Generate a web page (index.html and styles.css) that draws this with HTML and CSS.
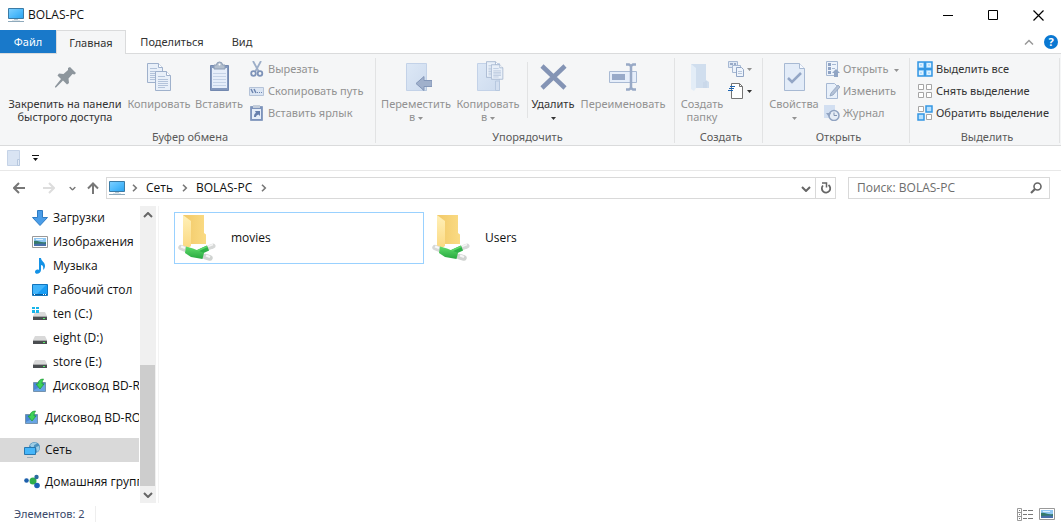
FILE: index.html
```html
<!DOCTYPE html>
<html lang="ru">
<head>
<meta charset="utf-8">
<title>BOLAS-PC</title>
<link rel="stylesheet" href="styles.css">
</head>
<body>
<svg class="defs" aria-hidden="true">
  <defs>
    <linearGradient id="screen" x1="0" y1="0" x2="1" y2="1"><stop offset="0" stop-color="#7fd0ff"/><stop offset=".5" stop-color="#52bcfc"/><stop offset="1" stop-color="#2aa3f0"/></linearGradient>
    <linearGradient id="folderBack" x1="0" y1="0" x2="1" y2="0"><stop offset="0" stop-color="#f2c968"/><stop offset="1" stop-color="#fadb84"/></linearGradient>
    <linearGradient id="folderFront" x1="0" y1="0" x2="0" y2="1"><stop offset="0" stop-color="#fff0b8"/><stop offset="1" stop-color="#fbd982"/></linearGradient>
    <linearGradient id="pipe" x1="0" y1="0" x2="0" y2="1"><stop offset="0" stop-color="#5fdc6c"/><stop offset="1" stop-color="#27a83f"/></linearGradient>
    <linearGradient id="pale" x1="0" y1="0" x2="1" y2="1"><stop offset="0" stop-color="#dde8f6"/><stop offset="1" stop-color="#cddbee"/></linearGradient>
  </defs>
  <symbol id="monitor" viewBox="0 0 16 16"><path d="M.5 1.500h15v10H.5z" fill="url(#screen)" stroke="#3b7ba5"/><path d="M6 12h4v1H6z" fill="#b7c9d5"/><path d="M4 13h8v1H4z" fill="#dbe3e8"/><path d="M0 14.500h16" stroke="#8ea9bb"/></symbol>
  <symbol id="page" viewBox="0 0 17 20"><path d="M.5.5h11l4 4v15H.5z" fill="#e9f0f9" stroke="#9fb1cc"/><path d="M11.500.5v4h4" fill="#fff" stroke="#9fb1cc"/><path d="M3 5.500h7M3 8.500h10M3 10.500h10M3 12.500h10M3 14.500h10M3 16.500h7" stroke="#b3c3da"/></symbol>
  <symbol id="drv" viewBox="0 0 16 16"><path d="M3 6h10l2 4H1z" fill="#d9d9d9"/><path d="M1 10h14v4H1z" fill="#4a4d50"/><path d="M1 10h14v1H1z" fill="#a5a7a8"/><path d="M11 12h2v1h-2z" fill="#55ee66"/></symbol>
  <symbol id="disc" viewBox="0 0 16 16"><path d="M1.500 4.500h12v9h-12z" fill="#4a86d6" stroke="#7593ae"/><path d="M2 12l11-6v7H2z" fill="#68a4e4"/><path d="M11.500 1C8 1 6 3 6 6H4l4 5 4-5h-2c0-2 .5-3 1.500-5z" fill="#3fd257" stroke="#1e9a33" stroke-width=".7"/></symbol>
  <symbol id="picture" viewBox="0 0 16 16"><path d="M.5 2.500h15v11H.5z" fill="#fff" stroke="#999"/><path d="M2 4h12v8H2z" fill="#8fc7f3"/><path d="M2 7c4-1 6 2 12 1v2H2z" fill="#357a6a"/><path d="M2 10c4 0 7-1 12 0v2H2z" fill="#486fab"/><path d="M4 5h7v1H4z" fill="#dff1ff"/></symbol>
  <symbol id="netfolder" viewBox="0 0 38 48">
    <path d="M5 1h21v18l2 1.500V30H5z" fill="url(#folderBack)"/><path d="M5 1l8 6v25l-3 2-5-2z" fill="url(#folderFront)"/>
    <path d="M31 33.500l4-1.500" stroke="#d6d8d7" stroke-width="5" stroke-linecap="round"/><path d="M30 32.500l5-2" stroke="#f6f6f6" stroke-width="1.500"/>
    <path d="M18 39.500L30 34" stroke="#2fb148" stroke-width="5.500"/><path d="M18 37.500L29 32.500" stroke="#5bd86a" stroke-width="1.500"/>
    <path d="M3 33.500l5 2" stroke="#d6d8d7" stroke-width="5.500" stroke-linecap="round"/><path d="M3 32.500l4 1.500" stroke="#f8f8f8" stroke-width="2"/>
    <path d="M27 42.500l5 1.500" stroke="#d0d3d1" stroke-width="5.500" stroke-linecap="round"/><path d="M28 41.500l4 1.500" stroke="#f6f6f6" stroke-width="2"/>
    <path d="M8 32.500l7 2 11 4.500-1.500 6L13 43l-6-4z" fill="url(#pipe)"/>
  </symbol>
  <symbol id="caret" viewBox="0 0 5 3"><path d="M0 0h5L2.500 3z" fill="currentColor"/></symbol>
  <symbol id="chev" viewBox="0 0 6 8"><path d="M1 .7L4.300 4 1 7.300" fill="none" stroke="#777" stroke-width="1.600"/></symbol>
  <symbol id="angle" viewBox="0 0 10 6"><path d="M1 1l4 4 4-4" fill="none" stroke="currentColor" stroke-width="2"/></symbol>
</svg>

<header class="titlebar">
  <svg class="i16"><use href="#monitor"/></svg>
  <h1 class="title">BOLAS-PC</h1>
  <div class="window-buttons">
    <button class="winbtn" aria-label="Свернуть"><svg class="i11" viewBox="0 0 11 11"><path d="M0 5.500h10" stroke="#000"/></svg></button>
    <button class="winbtn" aria-label="Развернуть"><svg class="i11" viewBox="0 0 11 11"><path d="M.5.5h9v9h-9z" fill="none" stroke="#000"/></svg></button>
    <button class="winbtn" aria-label="Закрыть"><svg class="i11" viewBox="0 0 11 11"><path d="M.5.5l10 10M10.500.5l-10 10" stroke="#000" stroke-width="1.200"/></svg></button>
  </div>
</header>

<nav class="tabs">
  <button class="tab tab-file">Файл</button>
  <button class="tab tab-active">Главная</button>
  <button class="tab tab-share">Поделиться</button>
  <button class="tab tab-view">Вид</button>
  <div class="tab-tools">
    <button class="plain" aria-label="Свернуть ленту"><svg width="10" height="6" viewBox="0 0 10 6"><path d="M1 5.500l4-4 4 4" fill="none" stroke="#999" stroke-width="1.500"/></svg></button>
    <button class="help" aria-label="Справка">?</button>
  </div>
</nav>

<section class="ribbon">
  <section class="group group-clip">
    <div class="group-body">
      <button class="big w-pin"><svg class="i32" viewBox="0 0 32 32"><path d="M21 6l6 6-1.500 1.500-2-.5-4 4.500.5 4.500-2 1.500-4-4-7 7-1 0 0-1 6-7.500-3.500-3.500L10 12.500l4.500.5 4.500-4 0-2z" fill="#8d969d"/></svg><span>Закрепить на панели<br>быстрого доступа</span></button>
      <button class="big w-copy off"><svg class="i32" viewBox="0 0 32 32"><use href="#page" x="4" y="2" width="17" height="20"/><use href="#page" x="12" y="10" width="17" height="20"/></svg><span>Копировать</span></button>
      <button class="big w-paste off"><svg class="i32" viewBox="0 0 32 32"><path d="M7.500 4.500h18v25h-18z" fill="#8398bd" stroke="#7389b0"/><path d="M9 7h15v20H9z" fill="#e6eefa"/><path d="M10 12.500h13M10 15.500h13M10 18.500h13M10 21.500h13M10 24.500h13" stroke="#c5d3e7"/><path d="M11 8V4h2.500a3 3 0 016 0H22v4z" fill="#b3bfce" stroke="#8b9cb5"/><circle cx="16.500" cy="3.500" r="1" fill="#fff"/></svg><span>Вставить</span></button>
      <div class="stack">
        <button class="small off"><svg class="i16" viewBox="0 0 16 16"><path d="M4 0l6 11M12 0L6 11" stroke="#9daec8" stroke-width="1.800"/><circle cx="4.500" cy="12.500" r="2.300" fill="none" stroke="#7e93b8" stroke-width="1.800"/><circle cx="11" cy="12.500" r="2.300" fill="none" stroke="#7e93b8" stroke-width="1.800"/></svg><span>Вырезать</span></button>
        <button class="small off"><svg class="i16" viewBox="0 0 16 16"><path d="M.5 4.500h14v8H.5z" fill="#dbe5f3" stroke="#b5c3d8"/><path d="M2 6l2 4M5 6l2 4" stroke="#6e86b0" stroke-width="1.500"/><path d="M8 9.500h1m1 0h1m1 0h1" stroke="#6e86b0"/></svg><span>Скопировать путь</span></button>
        <button class="small off"><svg class="i16" viewBox="0 0 16 16"><path d="M1.500 1.500h12v14h-12z" fill="#7d93bb" stroke="#8ca0c2"/><path d="M3 4h9v10H3z" fill="#e5edf8"/><path d="M4 0h7v3H4z" fill="#c3cddb"/><path d="M5 12c0-3 1-4 2-4L6 6h5v5L9.500 9.500C8 10 7 11 7 12z" fill="#667fac"/></svg><span>Вставить ярлык</span></button>
      </div>
    </div>
    <h2 class="group-title">Буфер обмена</h2>
  </section>

  <section class="group group-org">
    <div class="group-body">
      <button class="big w-move off"><svg class="i32" viewBox="0 0 32 32"><path d="M6.500 2.500h20v27h-20z" fill="url(#pale)" stroke="#c3d2e8"/><path d="M22.500 20v9.500h4V20z" fill="#d3dff0" stroke="#b7c8df"/><path d="M16 22.500l8-7v4h8v6h-8v4z" fill="#a0b0cb" stroke="#8497b8"/></svg><span>Переместить<br>в <svg class="caret"><use href="#caret"/></svg></span></button>
      <button class="big w-move off"><svg class="i32" viewBox="0 0 32 32"><path d="M5.500 2.500h22v27h-22z" fill="url(#pale)" stroke="#c3d2e8"/><path d="M23.500 20v9.500h4V20z" fill="#d3dff0" stroke="#b7c8df"/><use href="#page" x="14" y="0" width="14" height="17"/><use href="#page" x="19" y="3" width="13" height="16"/></svg><span>Копировать<br>в <svg class="caret"><use href="#caret"/></svg></span></button>
      <span class="divider"></span>
      <button class="big w-del"><svg class="i32" viewBox="0 0 32 32"><path d="M5 5l23 22M28 5L5 27" stroke="#8494b5" stroke-width="4.500"/></svg><span>Удалить<br><svg class="caret"><use href="#caret"/></svg></span></button>
      <button class="big w-ren off"><svg class="i32" viewBox="0 0 32 32"><path d="M2.500 10.500h27v11h-27z" fill="#e6eefa" stroke="#a9bad4"/><path d="M5 13h13v6H5z" fill="#98aac9"/><path d="M19 3.500h3l2 1.500 2-1.500h3M19 28.500h3l2-1.500 2 1.500h3M24 5v22" fill="none" stroke="#98a9c6" stroke-width="2.500"/></svg><span>Переименовать</span></button>
    </div>
    <h2 class="group-title">Упорядочить</h2>
  </section>

  <section class="group group-new">
    <div class="group-body">
      <button class="big w-new off"><svg class="i32" viewBox="0 0 32 32"><path d="M5 3h15v16l3 2v6H5z" fill="#d0deee"/><path d="M5 3l5 4v20l-2 3-3-2z" fill="#e3edf7"/><path d="M18 21v6M20 20v7" stroke="#c0d0e3" stroke-width=".7"/></svg><span>Создать<br>папку</span></button>
      <div class="stack">
        <button class="small off" aria-label="Создать элемент"><svg class="i16" viewBox="0 0 16 16"><path d="M.5.5h9v6h-9z" fill="#dfe8f4" stroke="#a6b8d3"/><path d="M2 2h3v2H2zM6 2h2v2H6z" fill="#99abc8"/><path d="M4.500 4.500h8v7h-8z" fill="#edf3fb" stroke="#a6b8d3"/><path d="M8.500 6.500h5l2 2v7h-7z" fill="#eef4fc" stroke="#91a5c5"/><path d="M10 10.500h4M10 12.500h4" stroke="#b8c6da"/></svg><svg class="caret"><use href="#caret"/></svg></button>
        <button class="small" aria-label="Простой доступ"><svg class="i16" viewBox="0 0 16 16"><path d="M3.500.5h8l3 3v12h-11z" fill="#fff" stroke="#747474"/><path d="M11.500.5v3h3" fill="none" stroke="#747474"/><path d="M2 3.500h5M1 5.500h5M0 7.500h5" stroke="#1b64b2" stroke-width="1.200"/></svg><svg class="caret"><use href="#caret"/></svg></button>
      </div>
    </div>
    <h2 class="group-title">Создать</h2>
  </section>

  <section class="group group-open">
    <div class="group-body">
      <button class="big w-prop off"><svg class="i32" viewBox="0 0 32 32"><path d="M6.500 2.500h15l5 5v22h-20z" fill="#e3ecf8" stroke="#a7b9d3"/><path d="M21.500 2.500v5h5" fill="#f7faff" stroke="#a7b9d3"/><path d="M10 17l4 4 9-9" fill="none" stroke="#93a6c6" stroke-width="2.500"/></svg><span>Свойства<br><svg class="caret"><use href="#caret"/></svg></span></button>
      <div class="stack">
        <button class="small off"><svg class="i16" viewBox="0 0 16 16"><path d="M2.500.5h11v14h-11z" fill="#edf3fb" stroke="#a6b8d3"/><path d="M4 2h3v3H4zM4 6h3v3H4zM4 10h3v3H4z" fill="#8fa3c4"/><path d="M8 3.500h4M8 7.500h3" stroke="#a6b8d3"/><path d="M8 12l4-4 4 4h-2v4h-4v-4z" fill="#91a5c4"/></svg><span>Открыть <svg class="caret caret-gap"><use href="#caret"/></svg></span></button>
        <button class="small off"><svg class="i16" viewBox="0 0 16 16"><path d="M2.500.5h8l3 3v12h-11z" fill="#e8f0fa" stroke="#a6b8d3"/><path d="M6 13l1-3 7-8 2 2-7 8z" fill="#b4c2d7" stroke="#879bb9" stroke-width=".7"/></svg><span>Изменить</span></button>
        <button class="small off"><svg class="i16" viewBox="0 0 16 16"><path d="M0 0h11v13H0z" fill="#d2dff1"/><circle cx="10" cy="10.500" r="5" fill="#e6edf6" stroke="#90a3c1" stroke-width="1.500"/><path d="M10 7.500v3h3" fill="none" stroke="#8194b2"/><path d="M2 8l5 0-2 4z" fill="#90a3c1"/></svg><span>Журнал</span></button>
      </div>
    </div>
    <h2 class="group-title">Открыть</h2>
  </section>

  <section class="group group-select">
    <div class="group-body">
      <div class="stack">
        <button class="small"><svg class="i16" viewBox="0 0 16 16"><path d="M1 1h6.500v6.500H1zM8.500 1H15v6.500H8.500zM1 8.500h6.500V15H1zM8.500 8.500H15V15H8.500z" fill="#b6e0ff" stroke="#3597e3" stroke-width="1.500"/><path d="M2.500 2.500h3v3h-3zM10.500 2.500h3v3h-3zM2.500 10.500h3v3h-3zM10.500 10.500h3v3h-3z" fill="none" stroke="#e1f3ff"/></svg><span>Выделить все</span></button>
        <button class="small"><svg class="i16" viewBox="0 0 16 16"><path d="M1.500 1.500h5v5h-5zM9.500 1.500h5v5h-5zM1.500 9.500h5v5h-5zM9.500 9.500h5v5h-5z" fill="#fff" stroke="#a5a5a5"/></svg><span>Снять выделение</span></button>
        <button class="small"><svg class="i16" viewBox="0 0 16 16"><path d="M1.500 1.500h5v5h-5zM9.500 9.500h5v5h-5z" fill="#fff" stroke="#a5a5a5"/><path d="M9 1h6v6H9zM1 9h6v6H1z" fill="#b6e0ff" stroke="#3597e3" stroke-width="1.500"/></svg><span>Обратить выделение</span></button>
      </div>
    </div>
    <h2 class="group-title">Выделить</h2>
  </section>
</section>

<div class="quickbar">
  <button class="plain" aria-label="Свойства"><svg class="i16" viewBox="0 0 16 16"><path d="M1.500.5h12v15h-12z" fill="#d9e4f3" stroke="#c5d3e7"/><path d="M11.500 9.500h2v6h-2z" fill="#e3ebf7" stroke="#b7c8df"/></svg></button>
  <button class="plain" aria-label="Настройка панели"><svg width="7" height="6" viewBox="0 0 7 6"><path d="M0 .5h7" stroke="#111"/><path d="M1 3h5L3.500 6z" fill="#111"/></svg></button>
</div>

<div class="addressrow">
  <div class="history">
    <button class="plain" aria-label="Назад"><svg width="12" height="12" viewBox="0 0 12 12"><path d="M12 6H1.500M6 1L1 6l5 5" fill="none" stroke="#777" stroke-width="2"/></svg></button>
    <button class="plain" aria-label="Вперед"><svg width="12" height="12" viewBox="0 0 12 12"><path d="M0 6h10.500M6 1l5 5-5 5" fill="none" stroke="#ddd" stroke-width="2"/></svg></button>
    <button class="plain" aria-label="Последние расположения"><svg class="recent" viewBox="0 0 10 6"><use href="#angle"/></svg></button>
    <button class="plain" aria-label="Вверх"><svg width="12" height="12" viewBox="0 0 12 12"><path d="M6 12V1.500M1 6.500l5-5 5 5" fill="none" stroke="#777" stroke-width="2"/></svg></button>
  </div>
  <div class="address">
    <svg class="i16"><use href="#monitor"/></svg>
    <svg class="chev"><use href="#chev"/></svg>
    <button class="crumb">Сеть</button>
    <svg class="chev"><use href="#chev"/></svg>
    <button class="crumb">BOLAS-PC</button>
    <svg class="chev"><use href="#chev"/></svg>
    <button class="addr-drop" aria-label="Показать адреса"><svg class="angle"><use href="#angle"/></svg></button>
    <button class="refresh" aria-label="Обновить"><svg width="12" height="12" viewBox="0 0 12 12"><path d="M3 3.500A4.200 4.200 0 108.500 3" fill="none" stroke="#666" stroke-width="1.800"/><path d="M2 1h4.500v4.500" fill="none" stroke="#666" stroke-width="1.500"/></svg></button>
  </div>
  <label class="search"><input type="search" placeholder="Поиск: BOLAS-PC" aria-label="Поиск"><svg width="12" height="12" viewBox="0 0 12 12"><circle cx="7.500" cy="4.500" r="3.500" fill="none" stroke="#666" stroke-width="1.600"/><path d="M5 7L1 11" stroke="#666" stroke-width="2.200"/></svg></label>
</div>

<main class="content">
  <nav class="tree">
    <a class="node child" href="#"><svg class="i16" viewBox="0 0 16 16"><path d="M5.500.5h5v7h5L8 15.500.5 7.500h5z" fill="#4a9de8" stroke="#2f7cc4"/></svg>Загрузки</a>
    <a class="node child" href="#"><svg class="i16"><use href="#picture"/></svg>Изображения</a>
    <a class="node child" href="#"><svg class="i16" viewBox="0 0 16 16"><path d="M7 0h2c0 3 4 4 4 8 0 2-1 3-2 4 1-4-1-5-2-5v5c0 4-6 5-6 2 0-2 2-3 4-2z" fill="#1492e6"/></svg>Музыка</a>
    <a class="node child" href="#"><svg class="i16" viewBox="0 0 16 16"><path d="M.5 2.500h15v11H.5z" fill="#189df5" stroke="#1275bd"/><path d="M1 3h13L5 12H1z" fill="#42b5fb"/><path d="M1 12.500h14" stroke="#0b5d9c"/><path d="M2 12.500h1m8 0h1m1 0h1" stroke="#fff"/></svg>Рабочий стол</a>
    <a class="node child" href="#"><svg class="i16" viewBox="0 0 16 16"><use href="#drv" width="16" height="16"/><path d="M0 1h3v2H0zM4 1h3v2H4zM0 4h3v3H0zM4 4h3v3H4z" fill="#18b5ea"/></svg>ten (C:)</a>
    <a class="node child" href="#"><svg class="i16"><use href="#drv"/></svg>eight (D:)</a>
    <a class="node child" href="#"><svg class="i16"><use href="#drv"/></svg>store (E:)</a>
    <a class="node child" href="#"><svg class="i16"><use href="#disc"/></svg>Дисковод BD-ROM</a>
    <a class="node root" href="#"><svg class="i16"><use href="#disc"/></svg>Дисковод BD-ROM</a>
    <a class="node root selected" href="#"><svg class="i16" viewBox="0 0 16 16"><circle cx="10.500" cy="5.500" r="5.500" fill="#4c91bd"/><path d="M6 3c2-3 6-3 7-2-1 2-3 1-3 3S7 6 6 3zM12 5l3-1c1 3 0 5-2 6z" fill="#9dcce4"/><path d="M.5 5.500h11v7H.5z" fill="#45b6fa" stroke="#2877ae"/><path d="M3 15.500h6" stroke="#9baebc"/></svg>Сеть</a>
    <a class="node root" href="#"><svg class="i16" viewBox="0 0 16 16"><circle cx="9" cy="7" r="3.500" fill="#2fae4b"/><circle cx="2.500" cy="6.500" r="2.300" fill="#1d5fac"/><circle cx="12.500" cy="3" r="2.200" fill="#2a6a9e"/><circle cx="13" cy="11.500" r="2.800" fill="#1c61b4"/></svg>Домашняя группа</a>
  </nav>
  <div class="scrollbar">
    <button class="scroll-btn" aria-label="Прокрутить вверх"><svg class="angle up"><use href="#angle"/></svg></button>
    <div class="track"><div class="thumb"></div></div>
    <button class="scroll-btn" aria-label="Прокрутить вниз"><svg class="angle"><use href="#angle"/></svg></button>
  </div>
  <section class="files">
    <a class="file focused" href="#"><svg class="netfolder"><use href="#netfolder"/></svg>movies</a>
    <a class="file" href="#"><svg class="netfolder"><use href="#netfolder"/></svg>Users</a>
  </section>
</main>

<footer class="status">
  <span class="count">Элементов: 2</span>
  <div class="views">
    <button class="plain" aria-label="Таблица"><svg width="16" height="13" viewBox="0 0 16 13"><path d="M.5.5h4v12h-4zM.5 4.500h4M.5 8.500h4" fill="#fff" stroke="#999"/><path d="M2 2.500h1M2 6.500h1M2 10.500h1" stroke="#777"/><path d="M6 2.500h4m1 0h5M6 6.500h4m1 0h5M6 10.500h4m1 0h5" stroke="#777"/></svg></button>
    <button class="plain" aria-label="Крупные значки"><svg class="i16"><use href="#picture"/></svg></button>
  </div>
</footer>
</body>
</html>
```

FILE: styles.css
```css
* { box-sizing: border-box; }
body {
  margin: 0;
  height: 100vh;
  display: flex;
  flex-direction: column;
  background: #fff;
  color: #111;
  font: 12px/16px "Open Sans", "Noto Sans", sans-serif;
  overflow: hidden;
}
button, input { font: inherit; color: inherit; }
button { border: 0; padding: 0; background: none; white-space: nowrap; }
a { color: inherit; text-decoration: none; }
svg { flex: none; }
.defs { width: 0; height: 0; position: absolute; }
.i16 { width: 16px; height: 16px; }
.i11 { width: 11px; height: 11px; }
.i32 { width: 32px; height: 32px; }
.plain { display: flex; align-items: center; justify-content: center; }

.titlebar { display: flex; align-items: center; height: 30px; padding-left: 8px; gap: 4px; flex: none; }
.title { margin: 0; font-size: 12px; font-weight: 400; }
.window-buttons { display: flex; margin-left: auto; align-self: stretch; }
.winbtn { width: 45px; display: flex; align-items: center; justify-content: center; }

.tabs { display: flex; height: 24px; flex: none; border-bottom: 1px solid #dadbdc; color: #333; font-size: 11px; font-family: "Noto Sans", sans-serif; }
.tab-file { width: 56px; background: #1979ca; color: #fff; height: 23px; }
.tab-active { width: 70px; height: 24px; background: #f5f6f7; border: 1px solid #dadbdc; border-bottom: 0; }
.tab-share { width: 92px; }
.tab-view { width: 48px; }
.tab-tools { display: flex; align-items: center; gap: 10px; margin-left: auto; padding-right: 3px; }
.help { width: 14px; height: 14px; border-radius: 50%; background: #0a78d2; color: #fff; font-weight: 700; line-height: 14px; }

.ribbon { display: flex; flex: none; background: #f5f6f7; border-bottom: 1px solid #dadbdc; padding-top: 4px; font-size: 11px; font-family: "Noto Sans", sans-serif; }
.group { display: flex; flex-direction: column; flex: none; background: linear-gradient(#e2e3e4, #e2e3e4) right top / 1px 85px no-repeat; color: #333; }
.group-clip { width: 376px; padding-left: 4px; }
.group-org { width: 299px; padding-left: 4px; }
.group-new { width: 88px; padding-left: 4px; }
.group-open { width: 147px; padding-left: 4px; }
.group-select { width: 150px; padding-left: 4px; }
.group-body { display: flex; height: 70px; }
.group-title { margin: 0; font-size: 11px; font-weight: 400; text-align: center; color: #5a5a5a; line-height: 17px; }
.big { display: flex; flex-direction: column; align-items: center; gap: 4px; padding-top: 3px; line-height: 13px; }
.w-pin { width: 122px; }
.w-copy { width: 66px; }
.w-paste { width: 54px; }
.w-move { width: 72px; }
.w-del { width: 50px; }
.w-ren { width: 90px; }
.w-new { width: 46px; }
.w-prop { width: 54px; }
.divider { width: 1px; height: 56px; margin: 4px 0 0 3px; background: #e2e3e4; }
.stack { display: flex; flex-direction: column; padding-left: 3px; }
.small { display: flex; align-items: center; gap: 3px; height: 22px; }
.off { color: #929292; }
.caret { width: 5px; height: 3px; vertical-align: middle; }
.caret-gap { margin-left: 3px; }

.quickbar { display: flex; align-items: center; gap: 10px; height: 25px; flex: none; padding-left: 6px; border-bottom: 1px solid #e8e8e8; }

.addressrow { display: flex; align-items: center; height: 34px; flex: none; padding: 0 11px 0 13px; color: #111; }
.history { display: grid; grid-template-columns: 30px 26px 18px 12px; justify-items: start; align-items: center; width: 93px; }
.recent { width: 7px; height: 5px; color: #777; }
.address { display: flex; align-items: center; flex: 1; height: 22px; border: 1px solid #d9d9d9; padding-left: 2px; }
.chev { width: 6px; height: 8px; margin-left: 7px; }
.crumb { margin-left: 8px; margin-right: 2px; }
.addr-drop { width: 18px; margin-left: auto; }
.refresh { display: flex; align-items: center; justify-content: center; width: 20px; align-self: stretch; border-left: 1px solid #d9d9d9; }
.angle { width: 10px; height: 6px; color: #666; }
.up { transform: rotate(180deg); }
.search { display: flex; align-items: center; width: 202px; height: 22px; margin-left: 12px; padding: 0 7px 0 8px; border: 1px solid #d9d9d9; }
.search input { flex: 1; min-width: 0; border: 0; padding: 0; outline: 0; appearance: none; background: none; }
.search input::placeholder { color: #6d6d6d; opacity: 1; }

.content { display: flex; flex: 1; min-height: 0; padding-top: 1px; }
.tree { width: 139px; overflow: hidden; flex: none; }
.node { display: flex; align-items: center; gap: 5px; height: 24px; white-space: nowrap; }
.child { padding-left: 32px; }
.root { padding-left: 24px; margin-top: 8px; }
.selected { background: #d9d9d9; }
.scrollbar { display: flex; flex-direction: column; width: 16px; margin-left: 1px; background: #f0f0f0; flex: none; }
.scroll-btn { height: 17px; display: flex; align-items: center; justify-content: center; }
.track { flex: 1; display: flex; flex-direction: column; justify-content: flex-end; }
.thumb { height: 46%; background: #cdcdcd; margin-right: 1px; }
.files { display: flex; align-items: flex-start; gap: 4px; flex: 1; margin-left: 2px; padding: 6px 0 0 15px; border-left: 1px solid #f3f3f3; }
.file { display: flex; align-items: center; width: 250px; height: 52px; padding-left: 3px; gap: 15px; border: 1px solid transparent; }
.focused { border-color: #99d1ff; }
.netfolder { width: 38px; height: 48px; }

.status { display: flex; align-items: center; height: 21px; flex: none; padding: 1px 6px 0 14px; color: #3b4a6b; font-size: 11px; font-family: "Noto Sans", sans-serif; }
.count { padding-right: 10px; border-right: 1px solid #eee; }
.views { display: flex; gap: 6px; margin-left: auto; }
```
